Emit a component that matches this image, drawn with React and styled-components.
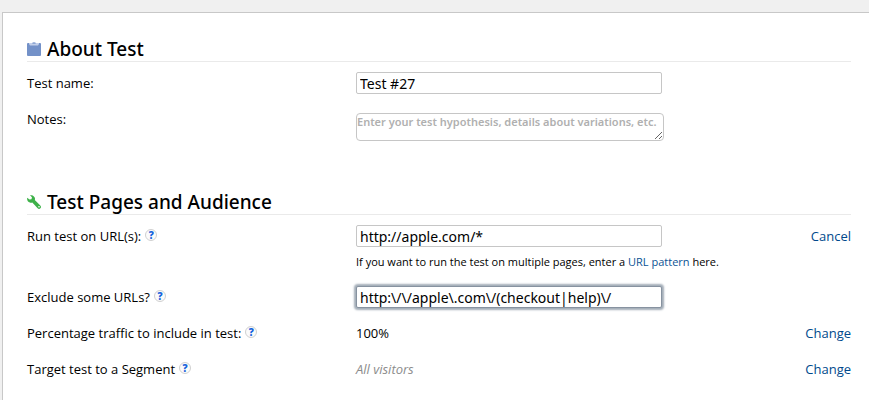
import React from 'react';
import styled, { createGlobalStyle } from 'styled-components';

const GlobalStyle = createGlobalStyle`
  *, *::before, *::after { box-sizing: border-box; }
  body {
    margin: 0;
    background: #f0f0f0;
    color: #000;
    font: 13px/22px "Open Sans", "Noto Sans", sans-serif;
  }
`;

const Page = styled.main`
  display: flex;
  min-height: 100vh;
  padding: 12px 0 0 2px;
`;

const Panel = styled.form`
  display: flex;
  flex: 1;
  flex-direction: column;
  gap: 49px;
  min-width: 0;
  padding: 24px 18px 0 24px;
  background: #fff;
  border: solid #c8c8c8;
  border-width: 1px 0 0 1px;
`;

const Section = styled.section`
  min-width: 0;
`;

const SectionHeader = styled.header`
  display: flex;
  align-items: center;
  gap: 6px;
  height: 25px;
  margin-bottom: 10px;
  border-bottom: 1px solid #eaeaea;
`;

const SectionTitle = styled.h2`
  margin: 0;
  font: 500 19px/24px "Noto Sans", sans-serif;
`;

const SectionIcon = styled.svg`
  flex: none;
  width: 14px;
  height: 14px;
`;

const Rows = styled.div`
  display: flex;
  flex-direction: column;
  gap: 14px;
`;

const Row = styled.div`
  display: grid;
  grid-template-columns: 329px minmax(0, 1fr);
  align-items: start;
`;

const LabelCell = styled.div`
  display: flex;
  gap: 4px;
`;

const ValueCell = styled.div`
  display: flex;
  align-items: flex-start;
  justify-content: space-between;
  gap: 16px;
`;

const Control = styled.div`
  display: flex;
  flex-direction: column;
  min-width: 0;
`;

const TextInput = styled.input`
  width: 306px;
  max-width: 100%;
  height: 22px;
  padding: 0 3px;
  border: 1px solid ${(p) => (p.$active ? '#8792a0' : '#c6c6c6')};
  border-radius: 2px;
  outline: none;
  background: #fff;
  box-shadow: ${(p) => (p.$active ? '0 0 2px 2px #a3adb8' : 'none')};
  color: #000;
  font: 14px/20px "Noto Sans", sans-serif;
`;

const NotesInput = styled.textarea`
  display: block;
  width: 308px;
  max-width: 100%;
  height: 28px;
  margin: 5px 0 0;
  padding: 0;
  overflow: hidden;
  border: 1px solid #c6c6c6;
  border-radius: 4px;
  outline: none;
  font: 600 11px/15px "Noto Sans", sans-serif;

  &::placeholder { color: #b0b0b0; opacity: 1; }
`;

const Hint = styled.p`
  margin: 4px 0 0;
  font-size: 11px;
  line-height: 21px;
`;

const Link = styled.a`
  color: #0b5394;
  text-decoration: none;
`;

const ActionButton = styled.button`
  padding: 0;
  border: 0;
  background: none;
  color: #00498c;
  font: inherit;
  cursor: pointer;
`;

const Placeholder = styled.em`
  color: #8c8c8c;
`;

const HelpButton = styled.button`
  flex: none;
  width: 12px;
  height: 12px;
  margin-top: 4px;
  padding: 0;
  border: 1px solid #d0d0d0;
  border-radius: 50%;
  background: #fbfbfb;
  color: #1763dc;
  font: 800 10px/10px "Open Sans", sans-serif;
  text-align: center;
  cursor: pointer;
`;

function ClipboardIcon() {
  return (
    <SectionIcon viewBox="0 0 14 14" aria-hidden="true">
      <rect y="1" width="14" height="13" rx="1" fill="#7391c8" />
      <path d="M2 1h3l1-1h2l1 1h3v1l-1 1.5H3L2 2z" fill="#c3d0ea" />
      <path d="M6 .5h2l1 1.5H5z" fill="#8fa8d3" />
    </SectionIcon>
  );
}

function WrenchIcon() {
  return (
    <SectionIcon viewBox="0 0 14 14" aria-hidden="true">
      <path
        d="M3 0 5 2.4 4.4 4.2 2.5 4.6.2 2.7C-.3 4.8.8 7 2.9 7.6c.9.3 1.7.2 2.4 0l5.3 5.6c.8.9 2 .9 2.8.1s.8-2-.1-2.8L7.8 5.1c.3-.8.3-1.7-.1-2.6C6.9.8 5 0 3 0z"
        fill="#3eb149"
      />
      <circle cx="12" cy="11.8" r=".8" fill="#fff" />
    </SectionIcon>
  );
}

function Field({ id, label, help, action, children }) {
  return (
    <Row>
      <LabelCell>
        {id ? <label htmlFor={id}>{label}</label> : <span>{label}</span>}
        {help && <HelpButton type="button" aria-label="Help">?</HelpButton>}
      </LabelCell>
      <ValueCell>
        <Control>{children}</Control>
        {action && <ActionButton type="button">{action}</ActionButton>}
      </ValueCell>
    </Row>
  );
}

export default function App() {
  return (
    <>
      <GlobalStyle />
      <Page>
        <Panel>
          <Section>
            <SectionHeader>
              <ClipboardIcon />
              <SectionTitle>About Test</SectionTitle>
            </SectionHeader>
            <Rows>
              <Field id="test-name" label="Test name:">
                <TextInput id="test-name" type="text" defaultValue="Test #27" />
              </Field>
              <Field id="notes" label="Notes:">
                <NotesInput
                  id="notes"
                  placeholder="Enter your test hypothesis, details about variations, etc."
                />
              </Field>
            </Rows>
          </Section>
          <Section>
            <SectionHeader>
              <WrenchIcon />
              <SectionTitle>Test Pages and Audience</SectionTitle>
            </SectionHeader>
            <Rows>
              <Field id="urls" label="Run test on URL(s):" help action="Cancel">
                <TextInput id="urls" type="text" defaultValue="http://apple.com/*" />
                <Hint>
                  If you want to run the test on multiple pages, enter a{' '}
                  <Link href="#url-pattern">URL pattern</Link> here.
                </Hint>
              </Field>
              <Field id="exclude" label="Exclude some URLs?" help>
                <TextInput
                  id="exclude"
                  type="text"
                  $active
                  defaultValue={'http:\\/\\/apple\\.com\\/(checkout|help)\\/'}
                />
              </Field>
              <Field label="Percentage traffic to include in test:" help action="Change">
                <span>100%</span>
              </Field>
              <Field label="Target test to a Segment" help action="Change">
                <Placeholder>All visitors</Placeholder>
              </Field>
            </Rows>
          </Section>
        </Panel>
      </Page>
    </>
  );
}
